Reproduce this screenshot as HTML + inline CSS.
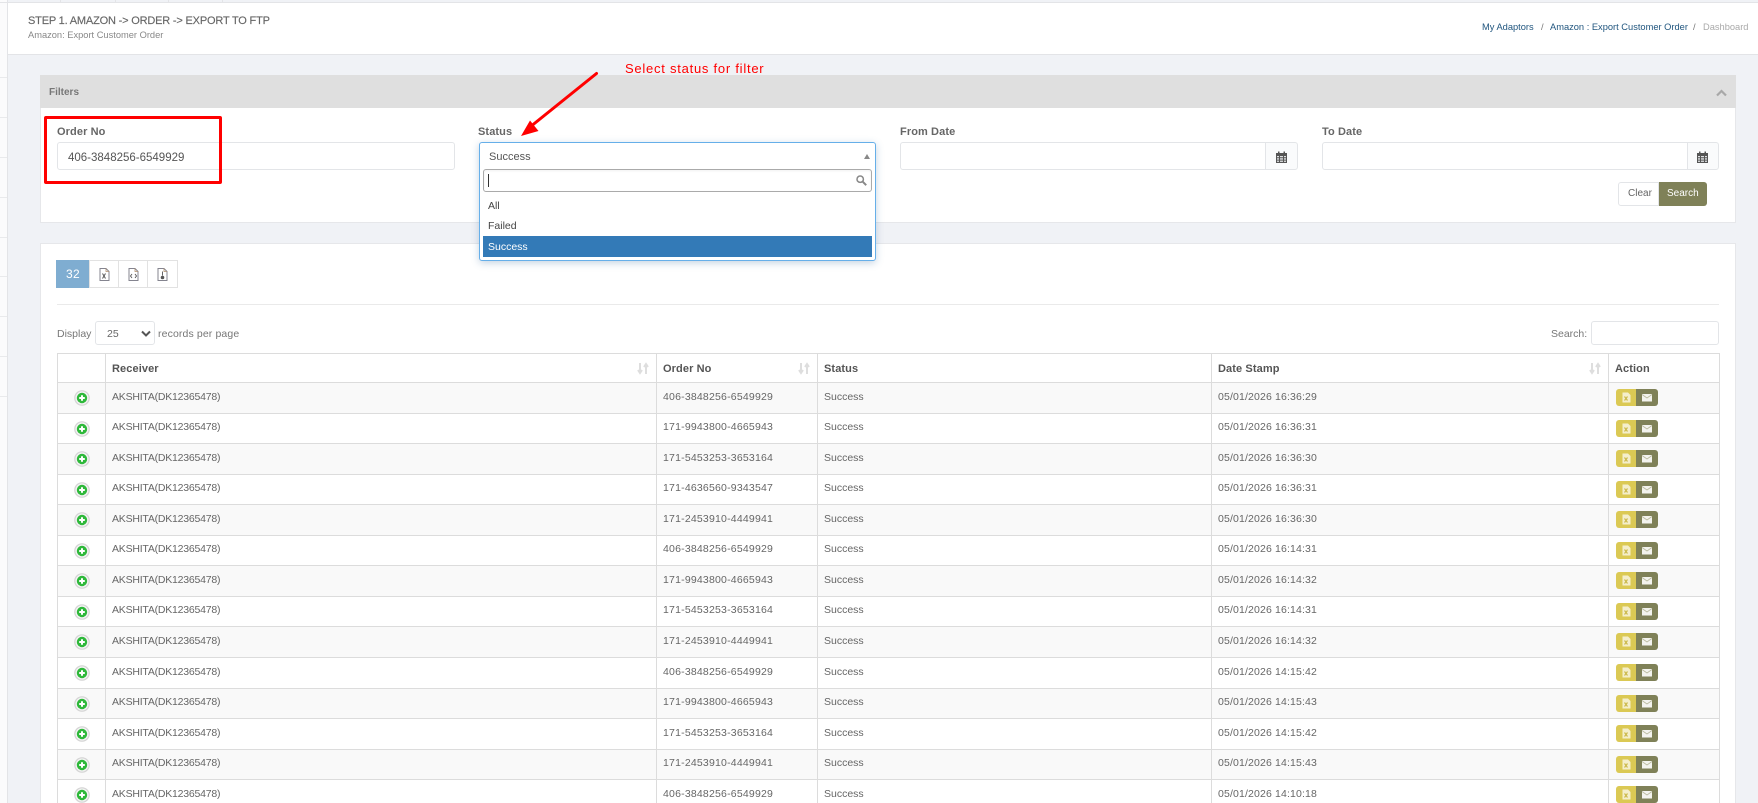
<!DOCTYPE html>
<html lang="en">
<head>
<meta charset="utf-8">
<title>Amazon: Export Customer Order</title>
<style>
*{box-sizing:border-box}
html,body{margin:0;padding:0;width:1758px;height:803px;overflow:hidden;background:#f0f2f6;font-family:"Liberation Sans",Arial,sans-serif;color:#666}
#w{position:relative;width:1758px;height:803px;overflow:hidden;background:#f0f2f6}
.a{position:absolute}
.t{position:absolute;white-space:nowrap;line-height:14px}
.lbl{font-weight:bold;font-size:11px;color:#666;letter-spacing:.1px}
.inp{position:absolute;background:#fff;border:1px solid #e3e5e8;border-radius:3px}
.cal{position:absolute;background:#fafbfc;border:1px solid #e3e5e8;border-radius:0 3px 3px 0}
table{position:absolute;left:57px;top:353px;width:1663px;border-collapse:separate;border-spacing:0;table-layout:fixed;border-top:1px solid #dcdcdc;border-left:1px solid #dcdcdc;background:#fff}
th,td{border-right:1px solid #dcdcdc;border-bottom:1px solid #dcdcdc;padding:0 0 0 6px;text-align:left;vertical-align:middle;white-space:nowrap;position:relative}
th{height:29px;font-size:11px;font-weight:bold;color:#555;letter-spacing:.1px;padding-top:2px}
td{font-size:10.5px;color:#666;padding-bottom:3px}
tr.x td{height:31px}
tr.y td{height:30px}
tr.s td{background:#f9f9f9}
td:nth-child(2){letter-spacing:-.22px}
td:nth-child(3){letter-spacing:.2px}
td:nth-child(5){letter-spacing:.14px}
.ic{position:absolute;left:16px;top:7px;width:16px;height:16px}
.bt{position:absolute;left:7px;top:6px;width:42px;height:17px}
.so{position:absolute;right:7px;top:8px;width:12px;height:13px}
</style>
</head>
<body>
<div id="w">
<svg width="0" height="0" style="position:absolute">
<defs>
<symbol id="plus" viewBox="0 0 16 16">
<circle cx="8" cy="8" r="7.2" fill="#f2f2f2" stroke="#d4d4d4" stroke-width="1.2"/>
<circle cx="8" cy="8" r="5.2" fill="#2eb83a"/>
<path d="M8 5.2v5.6M5.2 8h5.6" stroke="#fff" stroke-width="2"/>
</symbol>
<symbol id="act" viewBox="0 0 42 17">
<path d="M3 0h17v17H3a3 3 0 0 1-3-3V3a3 3 0 0 1 3-3z" fill="#dbc954"/>
<path d="M20 0h19a3 3 0 0 1 3 3v11a3 3 0 0 1-3 3H20z" fill="#7f8158"/>
<path d="M6.500 3.500h5.500l2.500 2.500v7.500h-8z" fill="#f4eecb"/>
<path d="M8.500 7.500l3 4M11.500 7.500l-3 4" stroke="#cbb94a" stroke-width="1.200"/>
<rect x="26" y="5" width="10" height="7.500" fill="#f3f3ee"/>
<path d="M26 5.500l5 3.500 5-3.500" fill="none" stroke="#b7b89a" stroke-width=".8"/>
</symbol>
<symbol id="sort" viewBox="0 0 12 13">
<path d="M3 1v9M1 8l2 3 2-3M9 12V3M7 5l2-3 2 3" fill="none" stroke="#dedede" stroke-width="2"/>
</symbol>
<symbol id="doc" viewBox="0 0 11 13">
<path d="M1 .5h6l3 3v9H1z" fill="#fff" stroke="#84848f" stroke-width="1"/>
<path d="M7 .5v3h3" fill="none" stroke="#b08f6e" stroke-width=".8"/>
</symbol>
<symbol id="cal" viewBox="0 0 11 12">
<path d="M0 2h11v10H0z" fill="#555"/>
<path d="M2 .5h1.500v2H2zM7.500 .5H9v2H7.500z" fill="#555"/>
<path d="M1 5h2v1.300H1zM4 5h3v1.300H4zM8 5h2v1.300H8zM1 7.300h2v1.300H1zM4 7.300h3v1.300H4zM8 7.300h2v1.300H8zM1 9.600h2v1.300H1zM4 9.600h3v1.300H4zM8 9.600h2v1.300H8z" fill="#dfe1e4"/>
</symbol>
</defs>
</svg>

<!-- background app chrome behind the frame -->
<div class="a" style="left:0;top:0;width:7px;height:803px;background:#fbfbfc"></div>
<div class="a" style="left:7px;top:0;width:1px;height:803px;background:#e3e4e7"></div>
<div class="a" style="left:0;top:2px;width:1758px;height:1px;background:#e3e4e7"></div>
<div class="a" style="left:0;top:77px;width:7px;height:1px;background:#e9eaec"></div>
<div class="a" style="left:0;top:117px;width:7px;height:1px;background:#e9eaec"></div>
<div class="a" style="left:0;top:157px;width:7px;height:1px;background:#e9eaec"></div>
<div class="a" style="left:0;top:197px;width:7px;height:1px;background:#e9eaec"></div>
<div class="a" style="left:0;top:237px;width:7px;height:1px;background:#e9eaec"></div>
<div class="a" style="left:0;top:276px;width:7px;height:1px;background:#e9eaec"></div>
<div class="a" style="left:0;top:316px;width:7px;height:1px;background:#e9eaec"></div>
<div class="a" style="left:0;top:356px;width:7px;height:1px;background:#e9eaec"></div>
<div class="a" style="left:0;top:396px;width:7px;height:1px;background:#e9eaec"></div>
<div class="a" style="left:60px;top:0;width:1px;height:2px;background:#e3e4e7"></div>
<div class="a" style="left:115px;top:0;width:1px;height:2px;background:#e3e4e7"></div>
<div class="a" style="left:168px;top:0;width:1px;height:2px;background:#e3e4e7"></div>
<div class="a" style="left:222px;top:0;width:1px;height:2px;background:#e3e4e7"></div>

<!-- page header -->
<div class="a" style="left:8px;top:3px;width:1750px;height:52px;background:#fff;border-bottom:1px solid #e3e4e7"></div>
<div class="t" style="left:28px;top:14px;font-size:11px;color:#666;letter-spacing:-.18px;-webkit-text-stroke:.15px #666">STEP 1. AMAZON -&gt; ORDER -&gt; EXPORT TO FTP</div>
<div class="t" style="left:28px;top:28px;font-size:9.300px;color:#888">Amazon: Export Customer Order</div>
<div class="t" style="left:1482px;top:20px;font-size:9.300px;color:#21567f">My Adaptors</div>
<div class="t" style="left:1541px;top:20px;font-size:9.300px;color:#777">/</div>
<div class="t" style="left:1550px;top:20px;font-size:9.300px;color:#21567f">Amazon : Export Customer Order</div>
<div class="t" style="left:1693px;top:20px;font-size:9.300px;color:#777">/</div>
<div class="t" style="left:1703px;top:20px;font-size:9.300px;color:#aaa">Dashboard</div>

<!-- filter panel -->
<div class="a" style="left:40px;top:75px;width:1696px;height:148px;background:#fff;border:1px solid #e6e7ea;border-top:0"></div>
<div class="a" style="left:40px;top:75px;width:1696px;height:33px;background:#dfdfdf"></div>
<div class="t" style="left:49px;top:86px;font-size:10px;font-weight:bold;color:#777">Filters</div>
<svg class="a" style="left:1716px;top:89px" width="11" height="8" viewBox="0 0 11 8"><path d="M1 6.500l4.500-4.500 4.500 4.500" fill="none" stroke="#a8a8a8" stroke-width="2.200"/></svg>

<div class="t lbl" style="left:57px;top:125px">Order No</div>
<div class="inp" style="left:57px;top:142px;width:398px;height:28px"></div>
<div class="t" style="left:68px;top:151px;font-size:11.500px;color:#555">406-3848256-6549929</div>

<div class="t lbl" style="left:478px;top:125px">Status</div>

<div class="t lbl" style="left:900px;top:125px">From Date</div>
<div class="inp" style="left:900px;top:142px;width:366px;height:28px;border-radius:3px 0 0 3px"></div>
<div class="cal" style="left:1265px;top:142px;width:33px;height:28px"></div>
<svg class="a" style="left:1276px;top:151px" width="11" height="12"><use href="#cal"/></svg>

<div class="t lbl" style="left:1322px;top:125px">To Date</div>
<div class="inp" style="left:1322px;top:142px;width:366px;height:28px;border-radius:3px 0 0 3px"></div>
<div class="cal" style="left:1687px;top:142px;width:32px;height:28px"></div>
<svg class="a" style="left:1697px;top:151px" width="11" height="12"><use href="#cal"/></svg>

<div class="a" style="left:1618px;top:182px;width:41px;height:24px;background:#fff;border:1px solid #e3e5e8;border-radius:3px 0 0 3px"></div>
<div class="t" style="left:1628px;top:187px;font-size:10px;color:#666">Clear</div>
<div class="a" style="left:1659px;top:182px;width:48px;height:24px;background:#7f8158;border-radius:0 3px 3px 0"></div>
<div class="t" style="left:1667px;top:187px;font-size:10px;color:#fff">Search</div>

<!-- table panel -->
<div class="a" style="left:40px;top:243px;width:1696px;height:560px;background:#fff;border:1px solid #e6e7ea;border-bottom:0"></div>
<div class="a" style="left:56px;top:260px;width:33px;height:28px;background:#7fadd1"></div>
<div class="t" style="left:66px;top:267px;font-size:12px;color:#fff;letter-spacing:.3px">32</div>
<div class="a" style="left:89px;top:260px;width:89px;height:28px;border:1px solid #e2e2e2;background:#fff"></div>
<div class="a" style="left:118px;top:260px;width:1px;height:28px;background:#e2e2e2"></div>
<div class="a" style="left:147px;top:260px;width:1px;height:28px;background:#e2e2e2"></div>
<svg class="a" style="left:99px;top:268px" width="11" height="13"><use href="#doc"/><path d="M3.500 5.500l3 5M6.500 5.500l-3 5" stroke="#555" stroke-width="1"/></svg>
<svg class="a" style="left:128px;top:268px" width="11" height="13"><use href="#doc"/><path d="M4 6l-1.500 2 1.500 2M7 6l1.500 2-1.500 2" fill="none" stroke="#555" stroke-width=".9"/></svg>
<svg class="a" style="left:157px;top:268px" width="11" height="13"><use href="#doc"/><path d="M5.500 3.500v4" stroke="#666" stroke-width="1"/><circle cx="5.500" cy="9.500" r="1.800" fill="#555"/></svg>

<div class="a" style="left:57px;top:304px;width:1662px;height:1px;background:#eaeaea"></div>

<div class="t" style="left:57px;top:327px;font-size:10.500px;color:#777">Display</div>
<div class="inp" style="left:95px;top:321px;width:60px;height:24px"></div>
<div class="t" style="left:107px;top:327px;font-size:10.500px;color:#666">25</div>
<svg class="a" style="left:141px;top:330px" width="10" height="7" viewBox="0 0 10 7"><path d="M1 1.500l4 4 4-4" fill="none" stroke="#555" stroke-width="2"/></svg>
<div class="t" style="left:158px;top:327px;font-size:10.500px;color:#777;letter-spacing:.12px">records per page</div>

<div class="t" style="left:1551px;top:327px;font-size:10.500px;color:#777">Search:</div>
<div class="inp" style="left:1591px;top:321px;width:128px;height:24px"></div>

<table>
<colgroup><col style="width:48px"><col style="width:551px"><col style="width:161px"><col style="width:394px"><col style="width:397px"><col style="width:111px"></colgroup>
<thead><tr>
<th></th>
<th>Receiver<svg class="so"><use href="#sort"/></svg></th>
<th>Order No<svg class="so"><use href="#sort"/></svg></th>
<th>Status</th>
<th>Date Stamp<svg class="so"><use href="#sort"/></svg></th>
<th>Action</th>
</tr></thead>
<tbody>
<tr class="x s"><td><svg class="ic"><use href="#plus"/></svg></td><td>AKSHITA(DK12365478)</td><td>406-3848256-6549929</td><td>Success</td><td>05/01/2026 16:36:29</td><td><svg class="bt"><use href="#act"/></svg></td></tr>
<tr class="y"><td><svg class="ic"><use href="#plus"/></svg></td><td>AKSHITA(DK12365478)</td><td>171-9943800-4665943</td><td>Success</td><td>05/01/2026 16:36:31</td><td><svg class="bt"><use href="#act"/></svg></td></tr>
<tr class="x s"><td><svg class="ic"><use href="#plus"/></svg></td><td>AKSHITA(DK12365478)</td><td>171-5453253-3653164</td><td>Success</td><td>05/01/2026 16:36:30</td><td><svg class="bt"><use href="#act"/></svg></td></tr>
<tr class="y"><td><svg class="ic"><use href="#plus"/></svg></td><td>AKSHITA(DK12365478)</td><td>171-4636560-9343547</td><td>Success</td><td>05/01/2026 16:36:31</td><td><svg class="bt"><use href="#act"/></svg></td></tr>
<tr class="x s"><td><svg class="ic"><use href="#plus"/></svg></td><td>AKSHITA(DK12365478)</td><td>171-2453910-4449941</td><td>Success</td><td>05/01/2026 16:36:30</td><td><svg class="bt"><use href="#act"/></svg></td></tr>
<tr class="y"><td><svg class="ic"><use href="#plus"/></svg></td><td>AKSHITA(DK12365478)</td><td>406-3848256-6549929</td><td>Success</td><td>05/01/2026 16:14:31</td><td><svg class="bt"><use href="#act"/></svg></td></tr>
<tr class="x s"><td><svg class="ic"><use href="#plus"/></svg></td><td>AKSHITA(DK12365478)</td><td>171-9943800-4665943</td><td>Success</td><td>05/01/2026 16:14:32</td><td><svg class="bt"><use href="#act"/></svg></td></tr>
<tr class="y"><td><svg class="ic"><use href="#plus"/></svg></td><td>AKSHITA(DK12365478)</td><td>171-5453253-3653164</td><td>Success</td><td>05/01/2026 16:14:31</td><td><svg class="bt"><use href="#act"/></svg></td></tr>
<tr class="x s"><td><svg class="ic"><use href="#plus"/></svg></td><td>AKSHITA(DK12365478)</td><td>171-2453910-4449941</td><td>Success</td><td>05/01/2026 16:14:32</td><td><svg class="bt"><use href="#act"/></svg></td></tr>
<tr class="x"><td><svg class="ic"><use href="#plus"/></svg></td><td>AKSHITA(DK12365478)</td><td>406-3848256-6549929</td><td>Success</td><td>05/01/2026 14:15:42</td><td><svg class="bt"><use href="#act"/></svg></td></tr>
<tr class="y s"><td><svg class="ic"><use href="#plus"/></svg></td><td>AKSHITA(DK12365478)</td><td>171-9943800-4665943</td><td>Success</td><td>05/01/2026 14:15:43</td><td><svg class="bt"><use href="#act"/></svg></td></tr>
<tr class="x"><td><svg class="ic"><use href="#plus"/></svg></td><td>AKSHITA(DK12365478)</td><td>171-5453253-3653164</td><td>Success</td><td>05/01/2026 14:15:42</td><td><svg class="bt"><use href="#act"/></svg></td></tr>
<tr class="y s"><td><svg class="ic"><use href="#plus"/></svg></td><td>AKSHITA(DK12365478)</td><td>171-2453910-4449941</td><td>Success</td><td>05/01/2026 14:15:43</td><td><svg class="bt"><use href="#act"/></svg></td></tr>
<tr class="x"><td><svg class="ic"><use href="#plus"/></svg></td><td>AKSHITA(DK12365478)</td><td>406-3848256-6549929</td><td>Success</td><td>05/01/2026 14:10:18</td><td><svg class="bt"><use href="#act"/></svg></td></tr>
</tbody>
</table>

<!-- status dropdown -->
<div class="a" style="left:479px;top:142px;width:397px;height:119px;background:#fff;border:1px solid #66afe9;border-radius:3px;box-shadow:0 2px 8px rgba(60,110,160,.3)"></div>
<div class="t" style="left:489px;top:150px;font-size:11px;color:#555">Success</div>
<svg class="a" style="left:864px;top:154px" width="6" height="5"><path d="M3 0l3 5H0z" fill="#888"/></svg>
<div class="a" style="left:483px;top:169px;width:389px;height:23px;background:#fff;border:1px solid #aaa;border-radius:3px;box-shadow:inset 0 1px 2px rgba(0,0,0,.06)"></div>
<div class="a" style="left:488px;top:174px;width:1px;height:13px;background:#333"></div>
<svg class="a" style="left:856px;top:175px" width="11" height="11" viewBox="0 0 11 11"><circle cx="4.200" cy="4.200" r="3.200" fill="none" stroke="#888" stroke-width="1.500"/><path d="M6.700 6.700l3.500 3.500" stroke="#888" stroke-width="2"/></svg>
<div class="t" style="left:488px;top:199px;font-size:10.500px;color:#444">All</div>
<div class="t" style="left:488px;top:219px;font-size:10.500px;color:#444">Failed</div>
<div class="a" style="left:483px;top:236px;width:389px;height:21px;background:#337ab7"></div>
<div class="t" style="left:488px;top:240px;font-size:10.500px;color:#fff">Success</div>

<!-- annotations -->
<div class="a" style="left:44px;top:116px;width:178px;height:68px;border:3px solid #f00;border-radius:2px"></div>
<div class="t" style="left:625px;top:62px;font-size:13px;color:#f00;letter-spacing:.75px">Select status for filter</div>
<svg class="a" style="left:510px;top:65px" width="95" height="80" viewBox="510 65 95 80">
<path d="M596.500 73.500L530 127" stroke="#f00" stroke-width="3" stroke-linecap="round" fill="none"/>
<path d="M521 136L530 120.500L538.500 131z" fill="#f00"/>
</svg>
</div>
</body>
</html>
